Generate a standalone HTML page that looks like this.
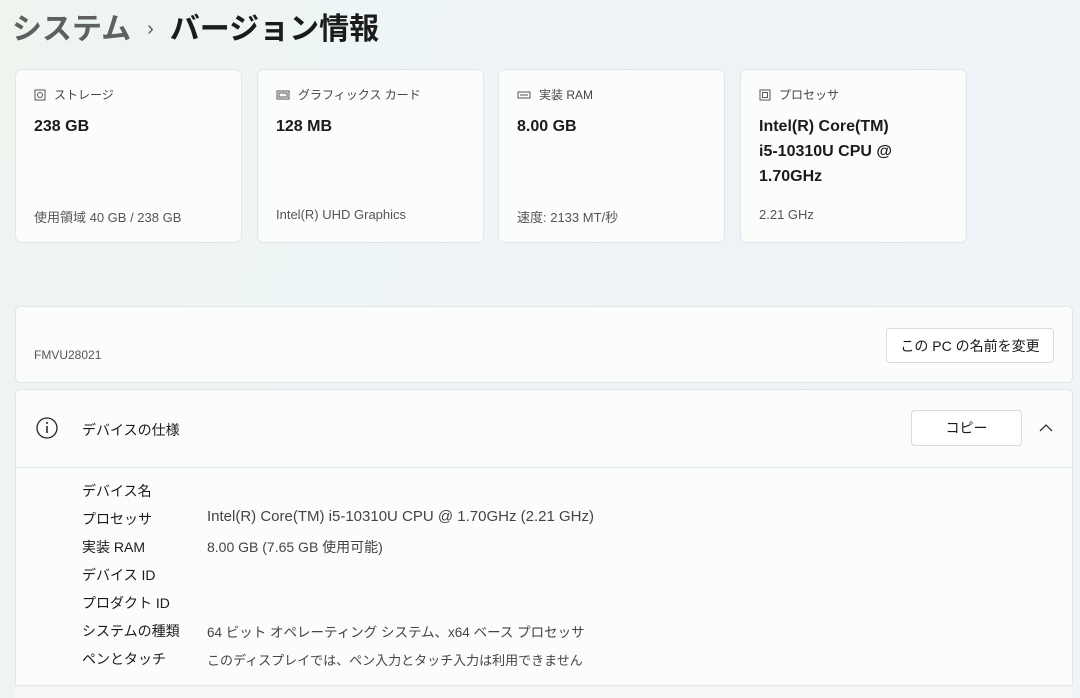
<!DOCTYPE html>
<html><head><meta charset="utf-8"><style>
*{margin:0;padding:0;box-sizing:border-box}
html,body{width:1080px;height:698px;overflow:hidden}
body{font-family:"Liberation Sans","Noto Sans CJK JP",sans-serif;color:#1b1b1b;
background:linear-gradient(100deg,#eef4ee 0%,#eef5f6 30%,#eef3f8 60%,#f0f4f8 100%);position:relative}
.title{position:absolute;top:4px;left:12px;font-size:30px;font-weight:bold;letter-spacing:0px}
.title .g{color:#5f5f5f;font-weight:bold}
.title .sep{color:#5f5f5f;font-size:20px;margin:0 16px;vertical-align:4px;font-weight:normal}
.card{position:absolute;top:69px;width:227px;height:174px;background:#fbfcfc;border:1px solid #e3e6e8;border-radius:7px}
.card .h{position:absolute;top:16px;left:18px;font-size:12px;color:#444;display:flex;align-items:center;gap:8px}
.card .v{position:absolute;top:44px;left:18px;font-size:16px;font-weight:bold;line-height:25px}
.card .s{position:absolute;top:137px;left:18px;font-size:13px;color:#555}
.panel{position:absolute;left:15px;width:1058px;background:#fbfcfc;border:1px solid #e3e6e8;border-radius:5px}
.btn{position:absolute;background:#fff;border:1px solid #d8dadc;border-radius:4px;font-size:14px;display:flex;align-items:center;justify-content:center}
.row{position:absolute;left:82px;font-size:14px;color:#1b1b1b}
.val{position:absolute;left:207px;font-size:14px;color:#444}
</style></head><body>
<div class="title"><span class="g">システム</span><span class="sep">›</span>バージョン情報</div>

<div class="card" style="left:15px"><div class="h"><svg width="12" height="12"><rect x="1" y="1" width="10" height="10" fill="none" stroke="#555"/><circle cx="6" cy="6" r="2.5" fill="none" stroke="#555"/></svg>ストレージ</div><div class="v">238 GB</div><div class="s">使用領域 40 GB / 238 GB</div></div>
<div class="card" style="left:257px"><div class="h"><svg width="14" height="12"><rect x="1" y="2" width="12" height="8" fill="none" stroke="#555"/><rect x="3" y="4" width="8" height="4" fill="none" stroke="#555"/></svg>グラフィックス カード</div><div class="v">128 MB</div><div class="s">Intel(R) UHD Graphics</div></div>
<div class="card" style="left:498px"><div class="h"><svg width="14" height="10"><rect x="1" y="2" width="12" height="6" fill="none" stroke="#555"/><line x1="3" y1="5" x2="11" y2="5" stroke="#555"/></svg>実装 RAM</div><div class="v">8.00 GB</div><div class="s">速度: 2133 MT/秒</div></div>
<div class="card" style="left:740px"><div class="h"><svg width="12" height="12"><rect x="1" y="1" width="10" height="10" fill="none" stroke="#555"/><rect x="3.5" y="3.5" width="5" height="5" fill="none" stroke="#555"/></svg>プロセッサ</div><div class="v">Intel(R) Core(TM)<br>i5-10310U CPU @<br>1.70GHz</div><div class="s">2.21 GHz</div></div>

<div class="panel" style="top:306px;height:77px">
<div style="position:absolute;left:18px;top:41px;font-size:12px;color:#555">FMVU28021</div>
<div class="btn" style="left:870px;top:21px;width:168px;height:35px">この PC の名前を変更</div>
</div>

<div class="panel" style="top:389px;height:300px">
<svg style="position:absolute;left:20px;top:27px" width="22" height="22"><circle cx="11" cy="11" r="10" fill="none" stroke="#222" stroke-width="1.3"/><line x1="11" y1="9" x2="11" y2="16" stroke="#222" stroke-width="1.5"/><circle cx="11" cy="6" r="1" fill="#222"/></svg>
<div style="position:absolute;left:66px;top:30px;font-size:14px">デバイスの仕様</div>
<div class="btn" style="left:895px;top:20px;width:111px;height:36px">コピー</div>
<svg style="position:absolute;left:1023px;top:33px" width="14" height="10"><polyline points="1,8 7,2 13,8" fill="none" stroke="#333" stroke-width="1.3"/></svg>
<div style="position:absolute;left:0;right:0;top:77px;border-top:1px solid #e3e6e8"></div>
</div>
<div class="row" style="top:481px">デバイス名</div>
<div class="row" style="top:509px">プロセッサ</div><div class="val" style="top:508px;font-size:15px">Intel(R) Core(TM) i5-10310U CPU @ 1.70GHz (2.21 GHz)</div>
<div class="row" style="top:537px">実装 RAM</div><div class="val" style="top:537px">8.00 GB (7.65 GB 使用可能)</div>
<div class="row" style="top:565px">デバイス ID</div>
<div class="row" style="top:593px">プロダクト ID</div>
<div class="row" style="top:621px">システムの種類</div><div class="val" style="top:621px;font-size:13.5px">64 ビット オペレーティング システム、x64 ベース プロセッサ</div>
<div class="row" style="top:649px">ペンとタッチ</div><div class="val" style="top:650px;font-size:13px">このディスプレイでは、ペン入力とタッチ入力は利用できません</div>
<div style="position:absolute;left:15px;width:1058px;top:685px;height:13px;background:#f6f7f4;border-top:1px solid #e3e6e8"></div>
</body></html>
